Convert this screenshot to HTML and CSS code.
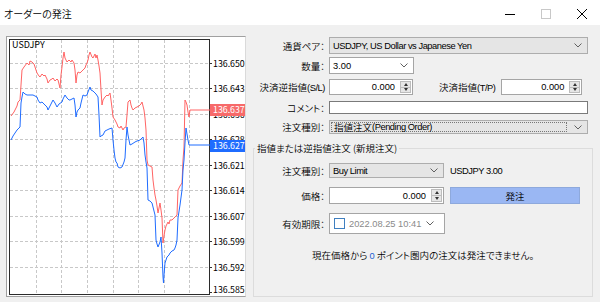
FILE: index.html
```html
<!DOCTYPE html>
<html lang="ja">
<head>
<meta charset="utf-8">
<title>オーダーの発注</title>
<link rel="stylesheet" href="styles.css">
</head>
<body>
<div class="titlebar">
  <span class="title">オーダーの発注</span>
  <div class="wctrls">
    <span class="wbtn"><svg width="10" height="10" viewBox="0 0 10 10"><path d="M0 5.5H10" stroke="#000"/></svg></span>
    <span class="wbtn"><svg width="10" height="10" viewBox="0 0 10 10"><rect x="0.5" y="0.5" width="9" height="9" fill="none" stroke="#c8c8c8"/></svg></span>
    <span class="wbtn"><svg width="10" height="10" viewBox="0 0 10 10"><path d="M0 0L10 10M10 0L0 10" stroke="#000"/></svg></span>
  </div>
</div>
<div class="main">
  <div class="chart">
    <svg width="238" height="259" viewBox="7 37 238 259">
      <g stroke="#c8c8c8" stroke-dasharray="3 2" fill="none">
        <path d="M10 63.5H209M10 88.5H209M10 114.5H209M10 139.5H209M10 165.5H209M10 190.5H209M10 216.5H209M10 241.5H209M10 267.5H209"/>
        <path d="M36.5 40V294M61.5 40V294M87.5 40V294M113.5 40V294M138.5 40V294M164.5 40V294M189.5 40V294"/>
      </g>
      <g stroke="#333">
        <path d="M209 63.5H212M209 88.5H212M209 114.5H212M209 139.5H212M209 165.5H212M209 190.5H212M209 216.5H212M209 241.5H212M209 267.5H212M209 292.5H212"/>
      </g>
      <rect x="9.5" y="39.5" width="200" height="255" fill="none" stroke="#2b2b2b"/>
      <text class="sym" x="12" y="48">USDJPY</text>
      <polyline fill="none" stroke="#ff6464" points="11,116 14,112 17,106 18,102 20,100 21,85 22,70 24,67 27,63 29,65 30,61 32,62 34,64 35,67 36,70 37,73 39,76 40,77 42,74 44,76 45,75 47,79 48,83 50,80 52,79 53,78 55,81 57,79 58,80 59,84 60,88 61,75 62,67 63,58 64,52 65,58 67,62 69,60 71,62 72,60 74,63 75,70 76,83 77,75 78,72 80,73 82,71 83,70 85,68 86,65 87,63 88,60 89,55 90,52 92,57 93,58 95,54 96,58 97,55 98,60 99,66 100,73 101,90 102,105 103,100 105,97 107,95 108,96 110,93 111,100 112,108 113,117 115,120 117,124 118,127 120,128 121,126 123,130 124,128 126,127 127,115 128,102 129,101 130,100 131,105 132,108 133,110 135,108 137,107 139,106 141,104 142,102 143,106 144,110 145,118 146,130 147,160 148,165 150,166 152,167 153,180 154,188 155,195 156,200 157,206 158,213 159,208 160,203 161,210 162,218 163,243 164,236 165,230 166,226 168,222 169,224 170,220 172,220 174,218 176,216 177,215 178,190 180,186 182,183 183,160 184,147 185,100 186,102 187,105 188,112 189,117 190,110 210,110"/>
      <polyline fill="none" stroke="#1f6cff" points="11,140 13,136 15,133 17,130 19,128 20,127 21,103 22,97 23,92 25,94 27,95 30,95 33,95 35,96 37,97 38,100 40,103 42,102 44,104 45,105 47,107 48,110 50,106 52,102 53,100 55,103 57,107 59,104 62,102 63,99 65,95 67,98 69,100 70,100 72,99 74,98 75,105 76,117 77,112 78,110 80,108 81,103 83,95 85,96 87,95 88,92 90,87 91,90 93,91 95,93 96,94 98,97 99,115 100,137 101,136 103,135 105,131 107,130 109,129 112,128 113,140 114,150 115,158 116,162 117,163 118,167 120,168 122,167 124,162 125,158 126,140 127,127 128,135 130,145 132,144 135,142 137,141 140,140 142,138 143,137 144,143 145,155 146,162 147,168 148,200 150,201 152,203 153,207 155,215 156,240 157,244 158,247 160,242 161,237 162,253 163,277 163.5,283 164,275 165,263 166,260 167,257 169,255 170,253 172,251 174,250 175,248 176,245 177,240 178,218 180,205 182,190 183,170 184,160 185,143 186,128 187,134 188,140 189,145 210,145"/>
      <g class="px">
        <text x="213" y="66.7">136.650</text>
        <text x="213" y="91.7">136.643</text>
        <text x="213" y="117.7">136.636</text>
        <text x="213" y="142.7">136.628</text>
        <text x="213" y="168.7">136.621</text>
        <text x="213" y="193.7">136.614</text>
        <text x="213" y="219.7">136.607</text>
        <text x="213" y="244.7">136.599</text>
        <text x="213" y="270.7">136.592</text>
        <text x="213" y="293.4">136.585</text>
      </g>
      <rect x="210" y="104" width="35" height="12" fill="#f76a6a"/>
      <text class="px tag" x="213" y="113.2">136.637</text>
      <rect x="210" y="140" width="35" height="12" fill="#1f6cff"/>
      <text class="px tag" x="213" y="149.2">136.627</text>
    </svg>
  </div>

  <div class="form">
    <div class="row r1">
      <span class="lbl">通貨ペア：</span>
      <div class="combo w259">
        <span class="txt l">USDJPY, US Dollar vs Japanese Yen</span>
        <svg class="chev" viewBox="0 0 8 5"><polyline points="0.5,0.5 4,4 7.5,0.5" fill="none" stroke="#606060"/></svg>
      </div>
    </div>
    <div class="row r2">
      <span class="lbl">数量：</span>
      <div class="combo white w85">
        <span class="txt n">3.00</span>
        <svg class="chev" viewBox="0 0 8 5"><polyline points="0.5,0.5 4,4 7.5,0.5" fill="none" stroke="#606060"/></svg>
      </div>
    </div>
    <div class="row r3">
      <span class="lbl">決済逆指値<span class="l">(S/L)</span></span>
      <div class="spin w84"><span class="val n">0.000</span><span class="sb"><i class="up"></i><i class="dn"></i></span></div>
      <span class="lbl2">決済指値<span class="l">(T/P)</span></span>
      <div class="spin w81"><span class="val n">0.000</span><span class="sb"><i class="up"></i><i class="dn"></i></span></div>
    </div>
    <div class="row r4">
      <span class="lbl">コメント：</span>
      <div class="edit w259"></div>
    </div>
    <div class="row r5">
      <span class="lbl">注文種別：</span>
      <div class="combo w259 nopad">
        <span class="focus">指値注文<span class="l">(Pending Order)</span></span>
        <span class="sep"></span>
        <svg class="chev" viewBox="0 0 8 5"><polyline points="0.5,0.5 4,4 7.5,0.5" fill="none" stroke="#606060"/></svg>
      </div>
    </div>

    <fieldset class="group">
      <legend>指値または逆指値注文 (新規注文)</legend>
      <div class="row g1">
        <span class="lbl g">注文種別：</span>
        <div class="combo w115">
          <span class="txt l">Buy Limit</span>
          <svg class="chev" viewBox="0 0 8 5"><polyline points="0.5,0.5 4,4 7.5,0.5" fill="none" stroke="#606060"/></svg>
        </div>
        <span class="info l">USDJPY 3.00</span>
      </div>
      <div class="row g2">
        <span class="lbl g">価格：</span>
        <div class="spin w115"><span class="val n">0.000</span><span class="sb"><i class="up"></i><i class="dn"></i></span></div>
        <div class="btn">発注</div>
      </div>
      <div class="row g3">
        <span class="lbl g">有効期限：</span>
        <div class="date">
          <span class="cb"></span>
          <span class="dt n">2022.08.25 10:41</span>
          <svg class="chev dchev" viewBox="0 0 8 5"><polyline points="0.5,0.5 4,4 7.5,0.5" fill="none" stroke="#606060"/></svg>
        </div>
      </div>
      <p class="msg">現在価格から <b class="n">0</b> ポイント圏内の注文は発注できません。</p>
    </fieldset>
  </div>
</div>
</body>
</html>
```

FILE: styles.css
```css
* { box-sizing: border-box; }
html, body { margin: 0; padding: 0; }
body {
  width: 600px;
  height: 306px;
  overflow: hidden;
  background: #fff;
  color: #000;
  font-family: "Noto Sans CJK JP", "Noto Sans", sans-serif;
  font-size: 9.5px;
  font-weight: 350;
  font-feature-settings: "palt";
}

/* Latin runs: narrower UI face */
.l { font-family: "Liberation Sans", Arial, sans-serif; font-size: 9.3px; letter-spacing: -0.45px; font-weight: 400; }
.n { font-family: "Liberation Sans", Arial, sans-serif; font-size: 9.3px; font-weight: 400; }

/* title bar */
.titlebar { height: 25px; display: flex; align-items: center; background: #fff; }
.title { flex: 1; padding-left: 4px; padding-top: 2px; font-size: 10px; }
.wctrls { display: flex; align-self: stretch; }
.wbtn { width: 36px; display: flex; align-items: center; justify-content: center; padding-top: 2px; }
.wbtn svg { display: block; }

/* main area */
.main { height: 277px; background: #f0f0f0; display: flex; align-items: flex-start; }

.chart {
  margin: 11px 0 0 6px;
  width: 240px;
  height: 261px;
  border: 1px solid #a0a0a0;
  border-right-color: #dadada;
  background: #fff;
}
.chart svg { display: block; }
.chart text { font-family: "Noto Sans CJK JP", "Noto Sans", sans-serif; font-weight: 400; }
.sym { font-size: 9px; fill: #000; }
.px text, .px { font-size: 8.8px; fill: #000; }
.tag { fill: #fff; }

/* form */
.form { margin: 12px 0 0 7px; width: 340px; }
.row { display: flex; align-items: center; }
.lbl { width: 72px; margin-right: 4px; text-align: right; white-space: nowrap; flex: none; }
.lbl.g { width: 71px; }
.r1 { height: 17px; }
.r2 { height: 17px; margin-top: 3px; }
.r3 { height: 16px; margin-top: 5px; }
.r4 { height: 13px; margin-top: 6px; }
.r5 { height: 14px; margin-top: 6px; }

.w259 { width: 259px; }
.w85 { width: 85px; }
.w84 { width: 84px; }
.w81 { width: 81px; }
.w115 { width: 115px; }

.combo {
  height: 100%;
  display: flex;
  align-items: center;
  border: 1px solid #adadad;
  background: #e5e5e5;
  padding-left: 3px;
  flex: none;
}
.combo.white { background: #fff; border-color: #a5a5a5; }
.combo.nopad { padding-left: 0; }
.combo .txt { flex: 1; white-space: nowrap; }
.chev { width: 8px; height: 5px; margin-right: 5px; flex: none; display: block; }
.focus {
  flex: 1;
  align-self: stretch;
  margin: 1px 0 1px 1px;
  border: 1px dotted #777;
  padding-left: 2px;
  display: flex;
  align-items: center;
  white-space: nowrap;
}
.sep { width: 7px; }

.spin {
  height: 100%;
  display: flex;
  border: 1px solid #a5a5a5;
  background: #fff;
  flex: none;
}
.spin .val { flex: 1; display: flex; align-items: center; justify-content: flex-end; padding-right: 4px; }
.sb {
  width: 11px;
  margin: 1px;
  display: flex;
  flex-direction: column;
  border: 1px solid #bcbcbc;
  background: #e6e6e6;
}
.sb i { flex: 1; display: flex; align-items: center; justify-content: center; }
.sb i + i { border-top: 1px solid #bcbcbc; }
.sb i::before { content: ""; border-left: 2.5px solid transparent; border-right: 2.5px solid transparent; }
.sb .up::before { border-bottom: 3px solid #333; }
.sb .dn::before { border-top: 3px solid #333; }

.lbl2 { margin-left: 26px; margin-right: 6px; white-space: nowrap; }

.edit { height: 100%; border: 1px solid #7a7a7a; background: #fff; }

/* group box */
.group {
  margin: 7px 0 0 0;
  padding: 0 0 33px 0;
  border: 1px solid #dcdcdc;
  min-width: 0;
}
.group legend { padding: 0 2px; margin-left: 1px; line-height: 14px; }
.g1 { height: 15px; margin-top: 8px; }
.g2 { height: 17px; margin-top: 9px; }
.g3 { height: 21px; margin-top: 9px; }
.info { margin-left: 6px; white-space: nowrap; }
.btn {
  width: 130px;
  height: 100%;
  margin-left: 6px;
  background: #9ab7f3;
  border: 1px solid #8ea9dc;
  display: flex;
  align-items: center;
  justify-content: center;
}
.date {
  width: 116px;
  height: 100%;
  border: 1px solid #a5a5a5;
  background: #fff;
  display: flex;
  align-items: center;
  padding-left: 4px;
}
.cb { width: 11px; height: 11px; border: 1px solid #3f7fc0; background: #fff; margin-right: 4px; flex: none; }
.dt { flex: 1; color: #8a8a8a; white-space: nowrap; }
.dchev { margin-right: 10px; }
.msg { margin: 14px 0 0 0; text-align: center; line-height: 14px; }
.msg b { font-weight: normal; color: #1d5fd0; }
```
